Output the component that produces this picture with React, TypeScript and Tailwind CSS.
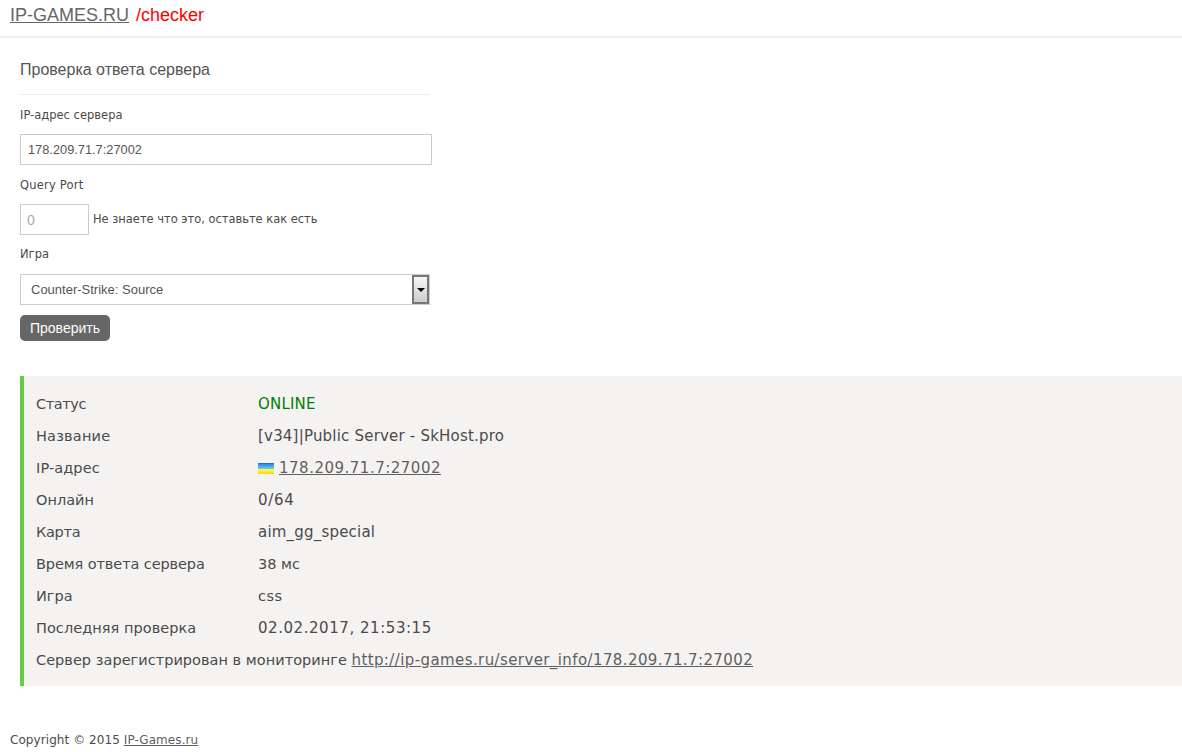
const rows = [
  { label: 'Статус', labelCls: 'tracking-[-0.4px]', value: <span className="tracking-[0.2px] text-[#008000]">ONLINE</span> },
  { label: 'Название', labelCls: 'tracking-[0.2px]', value: <span className="tracking-[0.2px]">[v34]|Public Server - SkHost.pro</span> },
  {
    label: 'IP-адрес',
    labelCls: 'tracking-[0.1px]',
    value: (
      <span className="flex items-center gap-[5px]">
        <span className="flex h-[11px] w-4 flex-col border-t border-[#1a6fd0]">
          <span className="flex-1 bg-gradient-to-b from-[#2a8ae8] to-[#70c8ff]" />
          <span className="flex-1 bg-gradient-to-b from-[#ffff55] to-[#f5d800]" />
        </span>
        <a href="#" className="tracking-[0.5px] text-[#5f5f5f] underline">178.209.71.7:27002</a>
      </span>
    ),
  },
  { label: 'Онлайн', labelCls: '', value: <span className="tracking-[0.7px]">0/64</span> },
  { label: 'Карта', labelCls: 'tracking-[-0.3px]', value: <span className="tracking-[0.2px]">aim_gg_special</span> },
  { label: 'Время ответа сервера', labelCls: 'tracking-[-0.1px]', value: <span className="text-[14.5px]">38 мс</span> },
  { label: 'Игра', labelCls: '', value: <span className="text-[14.5px] tracking-[0.5px]">css</span> },
  { label: 'Последняя проверка', labelCls: 'tracking-[0.05px]', value: <span className="tracking-[0.55px]">02.02.2017, 21:53:15</span> },
];

export default function App() {
  return (
    <div className="min-h-[752px] bg-white font-['Liberation_Sans',sans-serif] text-[#4a4a4a]">
      <header className="h-[38px] border-b-2 border-[#eee] pl-[10px] pt-[4px] text-[18px] leading-[22px]">
        <a href="#" className="text-[#666] underline">IP-GAMES.RU</a>
        <span className="ml-[7px] text-[#f00]">/checker</span>
      </header>

      <form className="ml-5 w-[412px] pt-[22px]">
        <h2 className="h-[35px] w-[410px] border-b border-[#eee] text-[16px] leading-5 text-[#555]">Проверка ответа сервера</h2>
        <label className="mt-[12px] block font-['DejaVu_Sans',sans-serif] text-[11.5px] leading-[16px]">IP-адрес сервера</label>
        <input readOnly value="178.209.71.7:27002" className="mt-[11px] block h-[31px] w-[412px] border border-[#ccc] px-[7px] text-[12.8px] text-[#555]" />
        <label className="mt-[12px] block font-['DejaVu_Sans',sans-serif] text-[11.5px] leading-[16px] tracking-[0.2px]">Query Port</label>
        <div className="mt-[11px] flex items-center gap-1">
          <input readOnly value="0" className="h-[31px] w-[69px] border border-[#ccc] px-[6px] text-[14px] text-[#aaa]" />
          <span className="font-['DejaVu_Sans',sans-serif] text-[11.45px]">Не знаете что это, оставьте как есть</span>
        </div>
        <label className="mt-[11px] block font-['DejaVu_Sans',sans-serif] text-[11.5px] leading-[16px]">Игра</label>
        <div className="relative mt-[12px] h-[31px] w-[410px]">
          <select className="h-full w-full appearance-none border border-[#ccc] bg-white pl-[10px] text-[13px] text-[#555]">
            <option>Counter-Strike: Source</option>
          </select>
          <span className="absolute right-px top-px flex h-[29px] w-[17px] items-center justify-center border-2 border-[#777] bg-gradient-to-b from-[#f8f8f8] to-[#ccc]">
            <span className="border-x-[4px] border-t-[4px] border-x-transparent border-t-black" />
          </span>
        </div>
        <button type="button" className="mt-[10px] block h-[26px] w-[90px] rounded-[5px] bg-[#666] text-[14px] text-white">Проверить</button>
      </form>

      <section className="mt-[35px] ml-5 flex h-[310px] flex-col border-l-4 border-[#66cc44] bg-[#f5f3f2] pl-3 pt-3 font-['DejaVu_Sans',sans-serif] text-[14.5px] leading-[32px]">
        {rows.map(r => (
          <div key={r.label} className="flex">
            <div className={`w-[222px] ${r.labelCls}`}>{r.label}</div>
            <div className="text-[15px]">{r.value}</div>
          </div>
        ))}
        <div>
          <span className="tracking-[0.03px]">Сервер зарегистрирован в мониторинге</span>{' '}
          <a href="#" className="text-[15px] tracking-[0.4px] text-[#5f5f5f] underline">http://ip-games.ru/server_info/178.209.71.7:27002</a>
        </div>
      </section>

      <footer className="mt-[44px] pl-[10px] font-['DejaVu_Sans',sans-serif] text-[12px] leading-[20px] tracking-[0.07px]">
        Copyright © 2015 <a href="#" className="text-[#5f5f5f] underline">IP-Games.ru</a>
      </footer>
    </div>
  );
}
